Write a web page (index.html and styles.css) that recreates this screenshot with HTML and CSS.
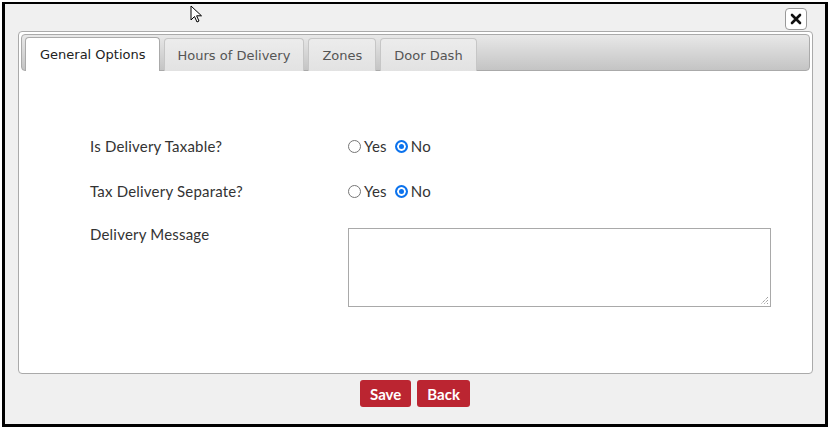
FILE: index.html
```html
<!DOCTYPE html>
<html>
<head>
<meta charset="utf-8">
<link rel="stylesheet" href="styles.css">
</head>
<body>
<div class="frame">
  <div class="titlebar">
    <button class="close" type="button"><svg width="12" height="12" viewBox="0 0 12 12"><path d="M2 2L10 10M10 2L2 10" stroke="#111" stroke-width="2.6" stroke-linecap="round"/></svg></button>
  </div>
  <div class="tabs">
    <div class="tabstrip">
      <div class="tab active">General Options</div>
      <div class="tab">Hours of Delivery</div>
      <div class="tab">Zones</div>
      <div class="tab">Door Dash</div>
    </div>
    <div class="panel">
      <div class="row">
        <div class="label">Is Delivery Taxable?</div>
        <div class="field">
          <label class="radio"><span class="dot"></span>Yes</label>
          <label class="radio"><span class="dot on"></span>No</label>
        </div>
      </div>
      <div class="row">
        <div class="label">Tax Delivery Separate?</div>
        <div class="field">
          <label class="radio"><span class="dot"></span>Yes</label>
          <label class="radio"><span class="dot on"></span>No</label>
        </div>
      </div>
      <div class="row msg">
        <div class="label">Delivery Message</div>
        <div class="field"><div class="textarea"><svg class="grip" width="9" height="9" viewBox="0 0 9 9"><path d="M8 1L1 8M8 4L4 8M8 7L7 8" stroke="#777" stroke-width="1" stroke-dasharray="1 1"/></svg></div></div>
      </div>
    </div>
  </div>
  <div class="actions">
    <button class="btn" type="button">Save</button>
    <button class="btn" type="button">Back</button>
  </div>
  <svg class="cursor" width="14" height="20" viewBox="0 0 14 20"><path d="M1 1L1 15L4.5 11.5L7 17L9 16L6.6 10.8L11.5 10.8Z" fill="#fff" stroke="#000" stroke-width="1"/></svg>
</div>
</body>
</html>
```
FILE: styles.css
```css
* { box-sizing: border-box; }
html, body { margin: 0; padding: 0; background: #fff; }
body { width: 828px; height: 428px; overflow: hidden; }
.frame {
  position: relative;
  margin: 2px 0 0 2px;
  width: 826px;
  height: 425px;
  border: 3px solid #000;
  border-top-width: 2px;
  background: #f0f0f0;
  display: flex;
  flex-direction: column;
}
.titlebar {
  height: 27px;
  display: flex;
  justify-content: flex-end;
  align-items: flex-start;
  padding: 4px 18px 0 0;
}
.close {
  width: 22px;
  height: 22px;
  border: 1px solid #999;
  border-radius: 4px;
  background: #fff;
  padding: 0;
  display: flex;
  align-items: center;
  justify-content: center;
}
.tabs {
  margin: 0 12px 0 13px;
  height: 343px;
  border: 1px solid #aaa;
  border-radius: 4px;
  background: #fff;
  padding: 2px;
  display: flex;
  flex-direction: column;
}
.tabstrip {
  height: 37px;
  border: 1px solid #aaa;
  border-radius: 4px;
  background: linear-gradient(#e8e8e8, #c4c4c4);
  display: flex;
  align-items: flex-end;
  gap: 4px;
  padding: 3px 0 0 3px;
}
.tab {
  height: 33px;
  margin-bottom: -1px;
  padding: 0 13px;
  border: 1px solid #c6c6c6;
  border-bottom: none;
  border-radius: 4px 4px 0 0;
  background: linear-gradient(#ececec, #e2e2e2);
  font-family: "DejaVu Sans", sans-serif;
  font-size: 13px;
  color: #555;
  display: flex;
  align-items: center;
}
.tab.active {
  background: #fff;
  border-color: #aaa;
  color: #222;
  height: 34px;
  padding: 0 13px 0 14px;
}
.panel {
  flex: 1;
  padding: 65px 0 0 69px;
  display: flex;
  flex-direction: column;
  font-family: "Lato", sans-serif;
  font-size: 15px;
  letter-spacing: 0.2px;
  color: #333;
}
.row {
  display: flex;
  align-items: center;
  height: 20px;
  margin-bottom: 25px;
}
.row.msg { align-items: flex-start; height: auto; margin-top: -1px; }
.label { width: 258px; }
.field { display: flex; align-items: center; gap: 8px; }
.radio { display: flex; align-items: center; gap: 3px; }
.dot {
  width: 13px; height: 13px;
  border: 1px solid #767676;
  border-radius: 50%;
  background: #fff;
  display: inline-block;
}
.dot.on {
  border: 2px solid #0b72ed;
  box-shadow: inset 0 0 0 2px #fff;
  background: #0b72ed;
}
.textarea {
  position: relative;
  margin-top: 3px;
  width: 423px;
  height: 79px;
  border: 1px solid #a9a9a9;
  background: #fff;
}
.grip { position: absolute; right: 1px; bottom: 1px; }
.actions {
  display: flex;
  justify-content: center;
  gap: 6px;
  padding-top: 6px;
}
.btn {
  height: 27px;
  padding: 0 10px;
  border: none;
  border-radius: 3px;
  background: #bb2531;
  color: #fff;
  font-family: "Lato", sans-serif;
  font-weight: bold;
  font-size: 15px;
}
.cursor { position: absolute; left: 185px; top: 1px; }
```
